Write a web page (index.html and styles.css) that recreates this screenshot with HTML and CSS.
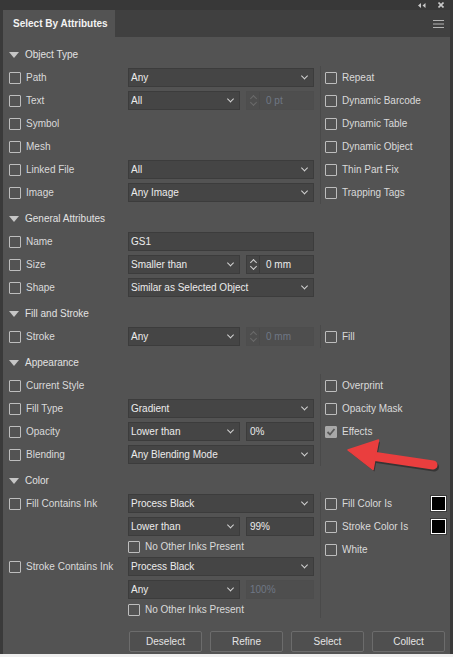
FILE: index.html
```html
<!DOCTYPE html>
<html>
<head>
<meta charset="utf-8">
<link rel="stylesheet" href="styles.css">
</head>
<body>
<div class="frame">
  <div class="topstrip">
    <svg class="ico-collapse" width="9" height="5" viewBox="0 0 9 5"><path d="M4 0 L1 2.5 L4 5 Z M8.5 0 L5.5 2.5 L8.5 5 Z" fill="#c8c8c8"/></svg>
    <svg class="ico-close" width="6" height="6" viewBox="0 0 6 6"><path d="M0.5 0.5 L5.5 5.5 M5.5 0.5 L0.5 5.5" stroke="#c8c8c8" stroke-width="1.6"/></svg>
  </div>
  <div class="tabbar">
    <div class="tab">Select By Attributes</div>
    <div class="menu">
      <svg width="11" height="8" viewBox="0 0 11 8"><path d="M0 0.5 H11 M0 4 H11 M0 7.5 H11" stroke="#b4b4b4" stroke-width="1"/></svg>
    </div>
  </div>
  <div class="panel">
    <section class="sec">
      <div class="hdr"><span class="tri"></span>Object Type</div>
      <div class="cols">
        <div class="left">
          <div class="row"><div class="lab"><span class="box"></span>Path</div><div class="dd full">Any<span class="chev"></span></div></div>
          <div class="row"><div class="lab"><span class="box"></span>Text</div><div class="dd half">All<span class="chev"></span></div><div class="num spin dis"><span class="arrows"></span><span class="sep"></span>0 pt</div></div>
          <div class="row"><div class="lab"><span class="box"></span>Symbol</div></div>
          <div class="row"><div class="lab"><span class="box"></span>Mesh</div></div>
          <div class="row"><div class="lab"><span class="box"></span>Linked File</div><div class="dd full">All<span class="chev"></span></div></div>
          <div class="row"><div class="lab"><span class="box"></span>Image</div><div class="dd full">Any Image<span class="chev"></span></div></div>
        </div>
        <div class="right">
          <div class="row"><span class="box"></span>Repeat</div>
          <div class="row"><span class="box"></span>Dynamic Barcode</div>
          <div class="row"><span class="box"></span>Dynamic Table</div>
          <div class="row"><span class="box"></span>Dynamic Object</div>
          <div class="row"><span class="box"></span>Thin Part Fix</div>
          <div class="row"><span class="box"></span>Trapping Tags</div>
        </div>
      </div>
    </section>

    <section class="sec">
      <div class="hdr"><span class="tri"></span>General Attributes</div>
      <div class="cols">
        <div class="left">
          <div class="row"><div class="lab"><span class="box"></span>Name</div><div class="dd full text">GS1</div></div>
          <div class="row"><div class="lab"><span class="box"></span>Size</div><div class="dd half">Smaller than<span class="chev"></span></div><div class="num spin"><span class="arrows"></span><span class="sep"></span>0 mm</div></div>
          <div class="row"><div class="lab"><span class="box"></span>Shape</div><div class="dd full">Similar as Selected Object<span class="chev"></span></div></div>
        </div>
      </div>
    </section>

    <section class="sec">
      <div class="hdr"><span class="tri"></span>Fill and Stroke</div>
      <div class="cols">
        <div class="left">
          <div class="row"><div class="lab"><span class="box"></span>Stroke</div><div class="dd half">Any<span class="chev"></span></div><div class="num spin dis"><span class="arrows"></span><span class="sep"></span>0 mm</div></div>
        </div>
        <div class="right">
          <div class="row"><span class="box"></span>Fill</div>
        </div>
      </div>
    </section>

    <section class="sec">
      <div class="hdr"><span class="tri"></span>Appearance</div>
      <div class="cols">
        <div class="left">
          <div class="row"><div class="lab"><span class="box"></span>Current Style</div></div>
          <div class="row"><div class="lab"><span class="box"></span>Fill Type</div><div class="dd full">Gradient<span class="chev"></span></div></div>
          <div class="row"><div class="lab"><span class="box"></span>Opacity</div><div class="dd half">Lower than<span class="chev"></span></div><div class="num">0%</div></div>
          <div class="row"><div class="lab"><span class="box"></span>Blending</div><div class="dd full">Any Blending Mode<span class="chev"></span></div></div>
        </div>
        <div class="right">
          <div class="row"><span class="box"></span>Overprint</div>
          <div class="row"><span class="box"></span>Opacity Mask</div>
          <div class="row"><span class="box checked"><svg width="10" height="10" viewBox="0 0 10 10"><path d="M1.5 5 L4 7.5 L8.5 2" fill="none" stroke="#5a5a5a" stroke-width="1.8"/></svg></span>Effects</div>
        </div>
      </div>
    </section>

    <section class="sec">
      <div class="hdr"><span class="tri"></span>Color</div>
      <div class="cols">
        <div class="left">
          <div class="row"><div class="lab"><span class="box"></span>Fill Contains Ink</div><div class="dd full">Process Black<span class="chev"></span></div></div>
          <div class="row"><div class="lab"></div><div class="dd half">Lower than<span class="chev"></span></div><div class="num">99%</div></div>
          <div class="row short"><div class="lab"></div><span class="box"></span>No Other Inks Present</div>
          <div class="row"><div class="lab"><span class="box"></span>Stroke Contains Ink</div><div class="dd full">Process Black<span class="chev"></span></div></div>
          <div class="row"><div class="lab"></div><div class="dd half">Any<span class="chev"></span></div><div class="num dis">100%</div></div>
          <div class="row short"><div class="lab"></div><span class="box"></span>No Other Inks Present</div>
        </div>
        <div class="right">
          <div class="row"><span class="box"></span>Fill Color Is<span class="swatch"></span></div>
          <div class="row"><span class="box"></span>Stroke Color Is<span class="swatch"></span></div>
          <div class="row"><span class="box"></span>White</div>
        </div>
      </div>
    </section>

    <div class="buttons">
      <div class="btn">Deselect</div>
      <div class="btn">Refine</div>
      <div class="btn">Select</div>
      <div class="btn">Collect</div>
    </div>
  </div>
</div>
<svg class="arrow" width="453" height="657" viewBox="0 0 453 657">
  <g transform="translate(1.5,2)" opacity="0.35">
    <line x1="372" y1="456" x2="433" y2="465" stroke="#000" stroke-width="9" stroke-linecap="round"/>
    <polygon points="348,450 378.5,440 373,469.5" fill="#000"/>
  </g>
  <line x1="372" y1="456" x2="433" y2="465" stroke="#ea3e3e" stroke-width="9" stroke-linecap="round"/>
  <polygon points="348,450 378.5,440 373,469.5" fill="#ea3e3e" stroke="#ea3e3e" stroke-width="1.5" stroke-linejoin="round"/>
</svg>
</body>
</html>
```
FILE: styles.css
```css
* { box-sizing: border-box; }
html, body { margin: 0; padding: 0; }
body {
  width: 453px;
  height: 657px;
  overflow: hidden;
  background: #efefef;
  font-family: "Liberation Sans", Arial, sans-serif;
  font-size: 10px;
  color: #dadada;
  position: relative;
}
.frame {
  width: 453px;
  height: 654px;
  background: #3a3a3a;
  display: flex;
  flex-direction: column;
}
.topstrip {
  height: 10px;
  background: #383838;
  display: flex;
  align-items: center;
  justify-content: flex-end;
  gap: 12px;
  padding-right: 9px;
}
.tabbar {
  height: 27px;
  margin-left: 3px;
  width: 447px;
  background: #404040;
  display: flex;
}
.tab {
  width: 112px;
  background: #535353;
  color: #f2f2f2;
  font-weight: bold;
  padding-left: 10px;
  display: flex;
  align-items: center;
}
.menu {
  margin-left: auto;
  padding-right: 6px;
  display: flex;
  align-items: center;
}
.panel {
  margin-left: 3px;
  width: 447px;
  flex: 1;
  background: #535353;
  padding-top: 3px;
}
.sec { padding-top: 3px; }
.hdr {
  height: 23px;
  display: flex;
  align-items: center;
  padding-left: 6px;
  color: #e2e2e2;
}
.tri {
  width: 0;
  height: 0;
  border-left: 5px solid transparent;
  border-right: 5px solid transparent;
  border-top: 6px solid #c6c6c6;
  margin-right: 6px;
}
.cols { display: flex; }
.left { width: 317px; padding-left: 6px; }
.right {
  flex: 1;
  border-left: 1px solid #4a4a4a;
  padding-left: 4px;
  padding-right: 4px;
}
.row {
  height: 23px;
  display: flex;
  align-items: center;
  white-space: nowrap;
}
.row.short { height: 17px; }
.lab {
  width: 119px;
  flex: none;
  display: flex;
  align-items: center;
}
.box {
  width: 12px;
  height: 12px;
  flex: none;
  border: 1px solid #bdbdbd;
  border-radius: 1px;
  margin-right: 5px;
  display: flex;
  align-items: center;
  justify-content: center;
}
.box.checked { background: #a8a8a8; border-color: #a8a8a8; }
.dd {
  height: 19px;
  background: #454545;
  border: 1px solid #3c3c3c;
  display: flex;
  align-items: center;
  padding-left: 2px;
  color: #ececec;
}
.dd.full { width: 186px; }
.dd.half { width: 112px; }
.chev {
  margin-left: auto;
  margin-right: 6px;
  width: 5px;
  height: 5px;
  border-right: 1.5px solid #d4d4d4;
  border-bottom: 1.5px solid #d4d4d4;
  transform: translateY(-1.5px) rotate(45deg);
}
.num {
  width: 68px;
  margin-left: 6px;
  height: 19px;
  background: #454545;
  border: 1px solid #3c3c3c;
  display: flex;
  align-items: center;
  padding-left: 3px;
  color: #ececec;
}
.num.dis {
  background: #4e4e4e;
  border-color: #4d4d4d;
  color: #6f7785;
}
.spin { padding-left: 3px; }
.arrows {
  width: 7px;
  height: 13px;
  position: relative;
  flex: none;
}
.arrows::before, .arrows::after {
  content: "";
  position: absolute;
  left: 1px;
  width: 4px;
  height: 4px;
  border-left: 1.2px solid #d0d0d0;
  border-top: 1.2px solid #d0d0d0;
}
.arrows::before { top: 2px; transform: rotate(45deg); }
.arrows::after { bottom: 2px; transform: rotate(225deg); }
.dis .arrows::before, .dis .arrows::after { border-color: #6a6a6a; }
.sep {
  width: 1px;
  height: 17px;
  background: #3a3a3a;
  margin: 0 6px 0 2px;
}
.dis .sep { background: #4a4a4a; }
.swatch {
  margin-left: auto;
  width: 15px;
  height: 15px;
  background: #000;
  border: 1px solid #fff;
  box-shadow: 0 0 0 1px #3a3a3a;
}
.buttons {
  display: flex;
  gap: 8px;
  padding-left: 126px;
  margin-top: 13px;
}
.btn {
  width: 73px;
  height: 21px;
  border: 1px solid #6c6c6c;
  border-radius: 2px;
  background: #4f4f4f;
  color: #e4e4e4;
  display: flex;
  align-items: center;
  justify-content: center;
}
.arrow {
  position: absolute;
  left: 0;
  top: 0;
  pointer-events: none;
}
```
